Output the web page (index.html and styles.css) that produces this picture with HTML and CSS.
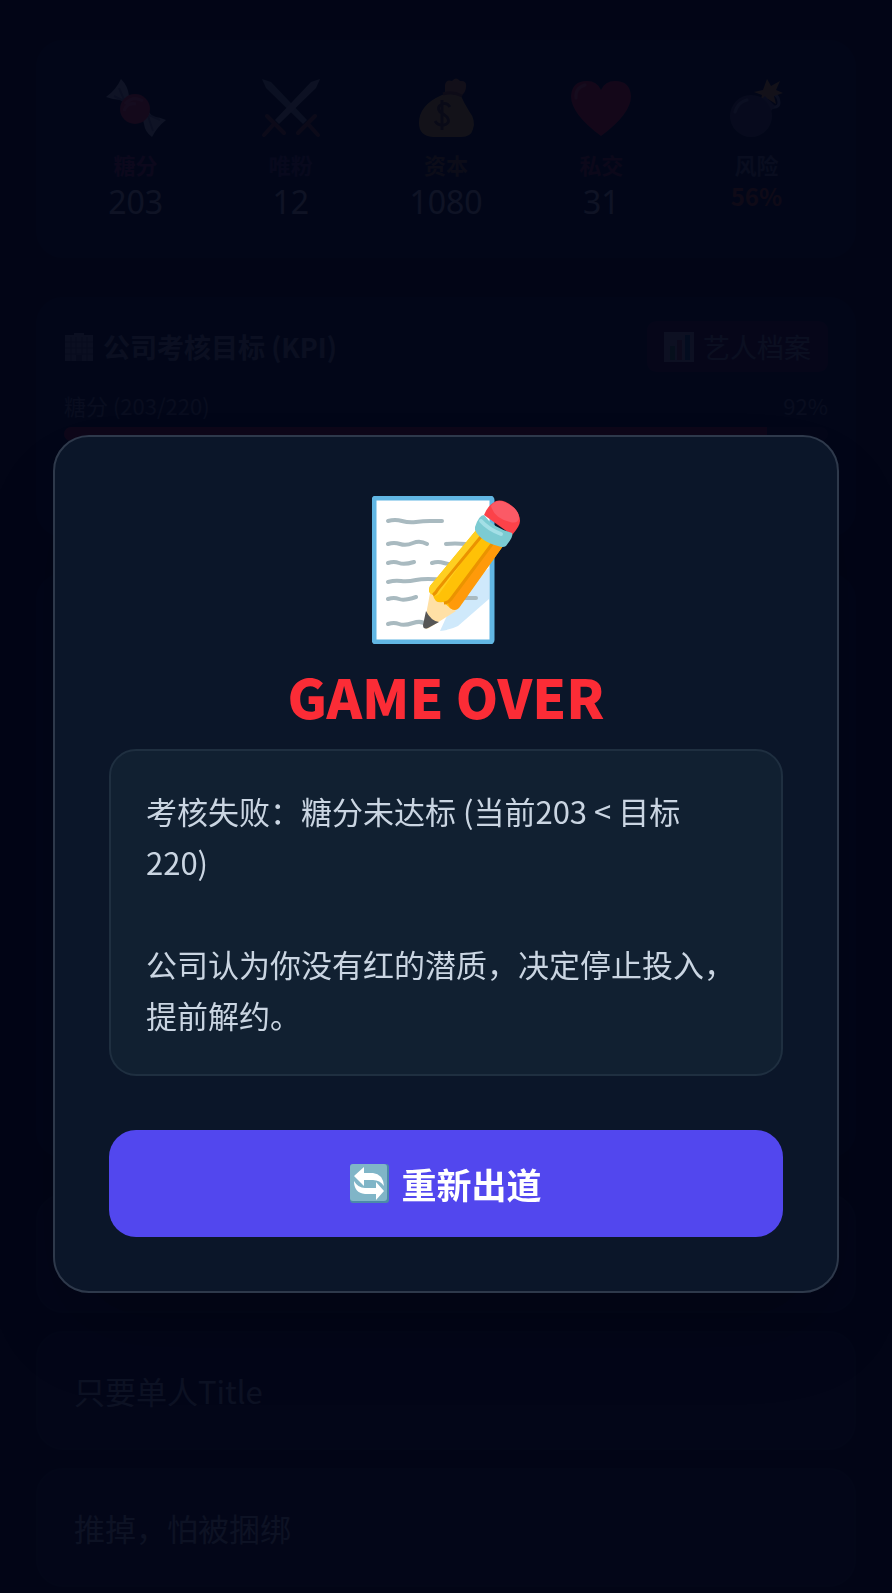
FILE: index.html
```html
<!DOCTYPE html>
<html lang="zh-CN">
<head>
  <meta charset="UTF-8">
  <meta name="viewport" content="width=device-width, initial-scale=1.0">
  <title>GAME OVER</title>
  <link rel="stylesheet" href="styles.css">
</head>
<body>
  <main class="game">
    <section class="card stats">
      <div class="stat">
        <svg class="stat-icon" viewBox="0 0 60 60" aria-hidden="true">
          <path d="M0 19Q10 12 15 1q7 7 8 17l2 6-6 4-4-6Q8 22 0 19Z" fill="#a4b0cc"/>
          <path d="M60 42Q51 49 46 59q-7-5-8-13l-2-8 6-5 5 6q7 0 13 3Z" fill="#a4b0cc"/>
          <path d="M13 10l6 14M8 18l10 5M42 38l5 15M43 37l11 5" stroke="#7380a0" stroke-width="2"/>
          <circle cx="29" cy="31" r="15" fill="#e0314a"/>
          <path d="M19 26q8-9 18-3M18 33q3-9 12-7" fill="none" stroke="#f0607c" stroke-width="3"/>
        </svg>
        <span class="stat-label sugar">糖分</span>
        <span class="stat-value">203</span>
      </div>
      <div class="stat">
        <svg class="stat-icon" viewBox="0 0 60 60" aria-hidden="true">
          <path d="M1 1l9 3 36 38-4 4L5 10z" fill="#7589a0"/>
          <path d="M59 1l-9 3-36 38 4 4L55 10z" fill="#8c9bb0"/>
          <path d="M6 38l17 17M37 55l17-17M13 46L3 57M47 46l10 11" stroke="#80453a" stroke-width="4" stroke-linecap="round"/>
        </svg>
        <span class="stat-label solo">唯粉</span>
        <span class="stat-value">12</span>
      </div>
      <div class="stat">
        <svg class="stat-icon" viewBox="0 0 60 60" aria-hidden="true">
          <path d="M29 17L29 7q1-6 7-4 4-5 8 0 7-1 6 6 0 5-5 9z" fill="#c87a35"/>
          <path d="M26 17q10-4 19 1 3 7 8 15 7 9 4 18-2 8-12 8H17Q3 58 3 45q0-18 23-28z" fill="#dba83c"/>
          <path d="M27 16q10-3 19 2" stroke="#8c5020" stroke-width="3" fill="none"/>
          <path d="M34 29q-3-5-8-3-6 3-2 8 4 2 7 5 4 6-3 8-6 1-9-4M26 22v30" fill="none" stroke="#5f4520" stroke-width="3"/>
        </svg>
        <span class="stat-label money">资本</span>
        <span class="stat-value">1080</span>
      </div>
      <div class="stat">
        <svg class="stat-icon" viewBox="0 0 60 60" aria-hidden="true">
          <path d="M30 58Q0 36 0 18 1 3 16 3q10 0 14 9Q34 3 44 3q15 0 16 15 0 18-30 40z" fill="#df2439"/>
          <path d="M5 20q-1-10 9-13" stroke="#f06070" stroke-width="3" fill="none" stroke-linecap="round"/>
        </svg>
        <span class="stat-label heart">私交</span>
        <span class="stat-value">31</span>
      </div>
      <div class="stat">
        <svg class="stat-icon" viewBox="0 0 60 60" aria-hidden="true">
          <path d="M44 29q12 2 8-9-2-4-7-5" fill="none" stroke="#7985a0" stroke-width="3"/>
          <path d="M41 1l4 7 9-5-4 9 7 3-9 3 2 8-8-5-8 4 2-8-8-3 9-2z" fill="#d99b35"/>
          <path d="M34 22l5-4 10 10-4 5z" fill="#59617c"/>
          <circle cx="25" cy="38" r="21" fill="#454966"/>
          <path d="M9 34q3-10 12-12" fill="none" stroke="#7985a0" stroke-width="3" stroke-linecap="round"/>
        </svg>
        <span class="stat-label">风险</span>
        <span class="stat-risk">56%</span>
      </div>
    </section>

    <section class="card kpi">
      <div class="kpi-header">
        <h2 class="kpi-title">
          <svg class="small-icon" viewBox="0 0 30 30" aria-hidden="true">
            <path d="M1 3h9V1h10v2h9v26H1z" fill="#768093"/>
            <path d="M1 10h28M1 16h28M1 22h28M7 5v24M12 5v18M18 5v18M23 5v24" stroke="#465266" stroke-width="1"/>
            <path d="M12 23h6v6h-6z" fill="#465266"/>
          </svg>
          公司考核目标 (KPI)
        </h2>
        <button type="button" class="profile-btn">
          <svg class="small-icon" viewBox="0 0 30 30" aria-hidden="true">
            <path d="M0 0h30v30H0z" fill="#8892a6"/>
            <path d="M6 14h5v14H6z" fill="#3b7d5a"/>
            <path d="M13 8h5v20h-5z" fill="#854858"/>
            <path d="M21 3h5v25h-5z" fill="#165c80"/>
          </svg>
          艺人档案
        </button>
      </div>
      <div class="kpi-row">
        <span>糖分 (203/220)</span>
        <span>92%</span>
      </div>
      <div class="bar">
        <div class="bar-fill" style="width: 92%"></div>
      </div>
    </section>

    <section class="card event"></section>

    <div class="options">
      <div class="option"></div>
      <button type="button" class="option">只要单人Title</button>
      <button type="button" class="option">推掉，怕被捆绑</button>
    </div>
  </main>

  <div class="overlay">
    <div class="modal" role="dialog" aria-modal="true" aria-labelledby="modal-title">
      <svg class="modal-icon" viewBox="0 0 148 148" aria-hidden="true">
        <rect x="2" y="2" width="118" height="144" rx="2" fill="#fff" stroke="#61b6e3" stroke-width="5"/>
        <path d="M68 135q10-1 18-5l31-27V72L85 98z" fill="#cfe9fb"/>
        <g fill="none" stroke="#a9bac0" stroke-width="4" stroke-linecap="round">
          <path d="M16 25q7-2 14 0t14 1 14-1 12 0"/>
          <path d="M16 48q6-2 12 0t13-1 14 1M74 48q8-1 20 0"/>
          <path d="M16 67q6-2 11 0t15-1M60 67q6-2 12 0t18 0"/>
          <path d="M16 86q7-2 13-1t15-1 30 0"/>
          <path d="M16 103q6-2 11 0t17-2M92 102h12"/>
          <path d="M16 128q6-2 11 0t14-1 14 2"/>
        </g>
        <path d="M58 97L52 130Q52 134 57 132L84 115z" fill="#ffe0a5"/>
        <path d="M54 115L51 129Q51 134 56 132L67 126Q59 125 54 115z" fill="#565656"/>
        <path d="M105 33l26 17-44 61q-4 5-9 1l-7-6q-8 2-10-7-6-2-3-9z" fill="#ffc107"/>
        <path d="M105 33l6 4-44 61q-3 3-6 1-6-2-3-9z" fill="#ffcf20"/>
        <path d="M123 44l8 6-44 62q-4 4-9 0l-2-4z" fill="#ff9a0a"/>
        <path d="M112 37L66 93q-2 4-5 6M123 44L79 103q-3 4-7 4" fill="none" stroke="#eb9300" stroke-width="3"/>
        <path d="M112 19Q116 9 124 5q7-2 16 5 8 7 8 15 0 5-8 14z" fill="#fc4249"/>
        <path d="M119 10q5-7 13-4 15 6 15 16-1 6-9 4-16-4-19-16z" fill="#fb5a66"/>
        <path d="M103 31q4-12 9-12 8 12 28 18 2 3-6 13-3 2-8 0-18-5-23-16z" fill="#7ccbd2"/>
        <path d="M109 25q7 8 20 13" fill="none" stroke="#a3dfe6" stroke-width="4" stroke-linecap="round"/>
      </svg>
      <h1 class="modal-title" id="modal-title">GAME OVER</h1>
      <div class="reason">
        <p>考核失败：糖分未达标 (当前203 &lt; 目标 220)</p>
        <p>公司认为你没有红的潜质，决定停止投入，提前解约。</p>
      </div>
      <button type="button" class="restart-btn">
        <svg class="restart-icon" viewBox="0 0 39 39" aria-hidden="true">
          <rect width="39" height="39" rx="3" fill="#4c8aa9"/>
          <rect width="37" height="37" rx="3" fill="#80b5c7"/>
          <path d="M4 12L14 3v6h9q10 1 11 13-4-6-11-6h-9v6z" fill="#fff"/>
          <path d="M34 27L26 36v-6H15Q4 29 4 17q4 7 11 7h11v-6z" fill="#fff"/>
        </svg>
        重新出道
      </button>
    </div>
  </div>
</body>
</html>
```
FILE: styles.css
```css
:root {
  --page-color: #020617;
  --card-color: #02182a;
  --modal-color: #0b1629;
  --reason-color: #112031;
  --text-color: #cad5e2;
  --danger-color: #fb2c36;
  --button-color: #5247ee;
}

* {
  box-sizing: border-box;
}

body {
  margin: 0;
  background-color: var(--page-color);
  color: var(--text-color);
  font-family: "Noto Sans CJK SC", sans-serif;
  font-size: 31px;
}

h1,
h2,
p {
  margin: 0;
}

button {
  border: none;
  font-family: inherit;
  cursor: pointer;
}

.game {
  display: flex;
  flex-direction: column;
  min-height: 100vh;
  padding: 40px 36px 6px;
}

.card {
  background-color: var(--card-color);
  border-radius: 27px;
}

.stats {
  display: grid;
  grid-template-columns: repeat(5, 1fr);
  height: 218px;
  padding: 38px 22px;
  margin-bottom: 39px;
}

.stat {
  display: flex;
  flex-direction: column;
  align-items: center;
}

.stat-icon {
  width: 60px;
  height: 60px;
  margin-bottom: 10px;
}

.stat-label {
  color: #56647c;
  font-size: 22px;
  font-weight: bold;
  line-height: 32px;
}

.stat-label.sugar {
  color: #7a2a60;
}

.stat-label.solo {
  color: #4c3468;
}

.stat-label.money {
  color: #7c5c28;
}

.stat-label.heart {
  color: #7a2a44;
}

.stat-value {
  color: #a4b0c4;
  font-family: "Noto Sans", sans-serif;
  font-size: 32px;
  line-height: 44px;
}

.stat-risk {
  color: #a0401c;
  font-size: 24px;
  font-weight: bold;
  line-height: 32px;
}

.kpi {
  height: 240px;
  padding: 24px 28px;
}

.kpi-header {
  display: flex;
  justify-content: space-between;
  align-items: center;
  margin-bottom: 17px;
}

.kpi-title,
.profile-btn {
  display: flex;
  align-items: center;
  gap: 9px;
  font-size: 27px;
}

.kpi-title {
  color: #75859c;
}

.small-icon {
  width: 30px;
  height: 30px;
}

.profile-btn {
  height: 51px;
  padding: 0 17px;
  border-radius: 9px;
  background-color: #34183c;
  color: #75859c;
}

.kpi-row {
  display: flex;
  justify-content: space-between;
  margin-bottom: 6px;
  font-size: 22px;
  line-height: 32px;
  color: #56647c;
}

.bar {
  height: 14px;
  border-radius: 7px;
  background-color: #1e1b34;
  overflow: hidden;
}

.bar-fill {
  height: 100%;
  background-color: #981c34;
}

.event {
  flex: 1;
  margin: 36px 0;
}

.options {
  display: flex;
  flex-direction: column;
  gap: 18px;
}

.option {
  height: 119px;
  padding: 0 36px;
  border: 2px solid #141c30;
  border-radius: 27px;
  background-color: #101428;
  color: #90a1b9;
  font-size: 31px;
  text-align: left;
}

/* Game over */
.overlay {
  position: fixed;
  inset: 0;
  display: flex;
  align-items: center;
  padding: 134px 53px 0;
  background-color: rgba(2, 5, 23, 0.92);
}

.modal {
  display: flex;
  flex-direction: column;
  align-items: center;
  width: 100%;
  padding: 54px;
  border: 2px solid #2e394b;
  border-radius: 36px;
  background-color: var(--modal-color);
  box-shadow: 0 45px 90px -20px rgba(0, 0, 0, 0.2);
}

.modal-icon {
  width: 148px;
  height: 148px;
  margin: 5px 0 16px;
}

.modal-title {
  margin-bottom: 17px;
  color: var(--danger-color);
  font-size: 54px;
  font-weight: 900;
  line-height: 72px;
}

.reason {
  width: 100%;
  margin-bottom: 54px;
  padding: 34px 35px;
  border: 2px solid #1f2f40;
  border-radius: 27px;
  background-color: var(--reason-color);
  line-height: 51px;
}

.reason p + p {
  margin-top: 51px;
}

.restart-btn {
  display: flex;
  justify-content: center;
  align-items: center;
  gap: 12px;
  width: 100%;
  height: 107px;
  border-radius: 27px;
  background-color: var(--button-color);
  color: #fff;
  font-size: 35px;
  font-weight: bold;
}

.restart-icon {
  width: 39px;
  height: 39px;
}
```
